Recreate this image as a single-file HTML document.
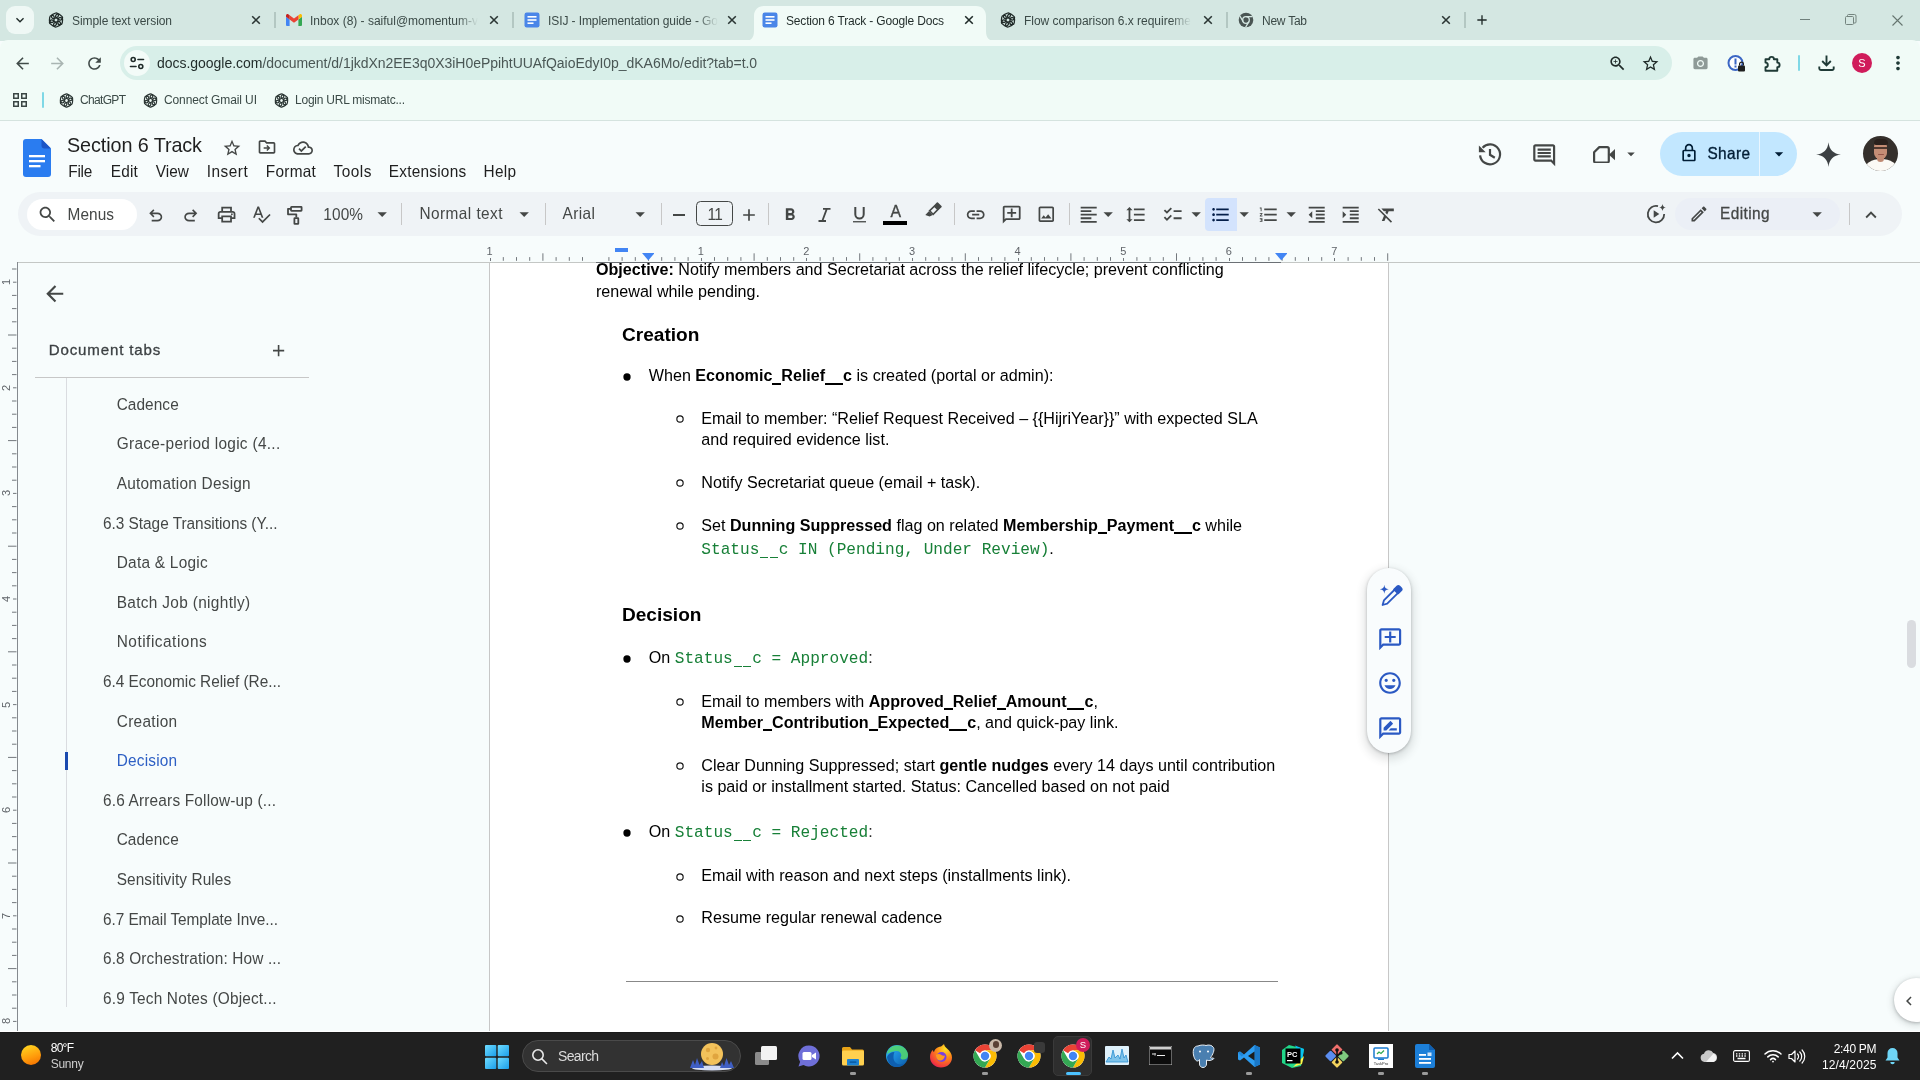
<!DOCTYPE html>
<html><head><meta charset="utf-8"><title>Section 6 Track - Google Docs</title>
<style>
html,body{margin:0;padding:0;width:1920px;height:1080px;overflow:hidden;background:#f7fcfc;}
body{position:relative;font-family:"Liberation Sans",sans-serif;}
.a{position:absolute;display:block;}
.t{position:absolute;white-space:nowrap;font-family:"Liberation Sans",sans-serif;}
#L{position:absolute;left:0;top:0;width:1920px;height:1080px;overflow:hidden;will-change:transform;}
</style></head><body><div id="L">
<div class="a" style="left:0px;top:120px;width:1920px;height:912px;background:#f7fcfc;"></div>
<svg class="a" style="left:23px;top:138.500px" width="28" height="38" viewBox="0 0 28 38"><path d="M3 0H18.500L28 9.500V35a3 3 0 0 1-3 3H3a3 3 0 0 1-3-3V3a3 3 0 0 1 3-3z" fill="#2a7cf0"/><path d="M18.500 0L28 9.500H21.500a3 3 0 0 1-3-3z" fill="#1b55c6"/><rect x="6" y="16" width="16" height="2.300" fill="#fff"/><rect x="6" y="21" width="16" height="2.300" fill="#fff"/><rect x="6" y="26" width="11.500" height="2.300" fill="#fff"/></svg>
<span class="t" style="top:131.84px;font-size:19.8px;line-height:26px;color:#1f1f1f;left:67px;transform:scaleY(1.0);transform-origin:0 19.86px;letter-spacing:-0.096px;">Section 6 Track</span>
<svg class="a" style="left:221.70px;top:137.50px;" width="20" height="20" viewBox="0 0 24 24" fill="#444746"><path d="M22 9.24l-7.19-.62L12 2 9.19 8.63 2 9.24l5.46 4.73L5.82 21 12 17.27 18.18 21l-1.63-7.03L22 9.24zM12 15.4l-3.76 2.27 1-4.28-3.32-2.88 4.38-.38L12 6.1l1.71 4.04 4.38.38-3.32 2.88 1 4.28L12 15.4z"/></svg>
<svg class="a" style="left:256.50px;top:137.00px;" width="20" height="20" viewBox="0 0 24 24" fill="#444746"><path d="M20 6h-8l-2-2H4c-1.1 0-2 .9-2 2v12c0 1.1.9 2 2 2h16c1.1 0 2-.9 2-2V8c0-1.1-.9-2-2-2zm0 12H4V6h5.170l2 2H20v10zm-7.600-1.200L16 13.200l-3.600-3.600-1.200 1.200 1.550 1.550H8v1.700h4.750L11.200 15.600z"/></svg>
<svg class="a" style="left:292.50px;top:137.50px;" width="20" height="20" viewBox="0 0 24 24" fill="#444746"><path d="M19.35 10.04C18.67 6.59 15.64 4 12 4 9.11 4 6.6 5.64 5.35 8.04 2.34 8.36 0 10.91 0 14c0 3.31 2.69 6 6 6h13c2.76 0 5-2.24 5-5 0-2.64-2.05-4.78-4.65-4.960zM19 18H6c-2.210 0-4-1.790-4-4 0-2.050 1.530-3.760 3.560-3.970l1.070-.11.5-.95C8.080 7.140 9.940 6 12 6c2.620 0 4.880 1.860 5.390 4.430l.3 1.500 1.530.11c1.560.1 2.780 1.410 2.780 2.960 0 1.650-1.350 3-3 3zm-9-3.820l-2.090-2.090L6.500 13.500 10 17l6.010-6.010-1.410-1.410z"/></svg>
<span class="t" style="top:161.66px;font-size:15.4px;line-height:20px;color:#1f1f1f;left:68.3px;transform:scaleY(1.03);transform-origin:0 15.34px;letter-spacing:-0.271px;">File</span>
<span class="t" style="top:161.66px;font-size:15.4px;line-height:20px;color:#1f1f1f;left:110.8px;transform:scaleY(1.03);transform-origin:0 15.34px;letter-spacing:0.156px;">Edit</span>
<span class="t" style="top:161.66px;font-size:15.4px;line-height:20px;color:#1f1f1f;left:155.8px;transform:scaleY(1.03);transform-origin:0 15.34px;letter-spacing:-0.031px;">View</span>
<span class="t" style="top:161.66px;font-size:15.4px;line-height:20px;color:#1f1f1f;left:206.7px;transform:scaleY(1.03);transform-origin:0 15.34px;letter-spacing:0.500px;">Insert</span>
<span class="t" style="top:161.66px;font-size:15.4px;line-height:20px;color:#1f1f1f;left:265.8px;transform:scaleY(1.03);transform-origin:0 15.34px;letter-spacing:0.250px;">Format</span>
<span class="t" style="top:161.66px;font-size:15.4px;line-height:20px;color:#1f1f1f;left:333.5px;transform:scaleY(1.03);transform-origin:0 15.34px;letter-spacing:0.516px;">Tools</span>
<span class="t" style="top:161.66px;font-size:15.4px;line-height:20px;color:#1f1f1f;left:388.7px;transform:scaleY(1.03);transform-origin:0 15.34px;letter-spacing:0.245px;">Extensions</span>
<span class="t" style="top:161.66px;font-size:15.4px;line-height:20px;color:#1f1f1f;left:483.5px;transform:scaleY(1.03);transform-origin:0 15.34px;letter-spacing:0.281px;">Help</span>
<svg class="a" style="left:1477px;top:141px;" width="26" height="26" viewBox="0 0 26 26"><path d="M3.100 14.300A10 10 0 1 0 5.600 6.700" fill="none" stroke="#444746" stroke-width="2.200"/><path d="M1.900 4.400V11.200H8.700z" fill="#444746"/><path d="M13 8V13.800L17.800 16.700" fill="none" stroke="#444746" stroke-width="2.200"/></svg>
<svg class="a" style="left:1530.80px;top:141.90px;" width="26.4" height="26.4" viewBox="0 0 24 24" fill="#444746"><path d="M21.99 4c0-1.1-.89-2-1.99-2H4c-1.1 0-2 .9-2 2v12c0 1.1.9 2 2 2h14l4 4-.01-18zM20 4v13.17L18.83 16H4V4h16zM6 12h12v2H6zm0-3h12v2H6zm0-3h12v2H6z"/></svg>
<svg class="a" style="left:1592.8px;top:145.5px;" width="22.4" height="17.6" viewBox="0 0 22.4 17.6"><path d="M6.300 1.100H14.200a1.600 1.600 0 0 1 1.600 1.600V14.900a1.600 1.600 0 0 1-1.600 1.600H2.700a1.600 1.600 0 0 1-1.600-1.600V6.300z" fill="none" stroke="#444746" stroke-width="2.200" stroke-linejoin="round"/><path d="M22.300 2.800V14.600L15.900 8.700z" fill="#444746"/></svg>
<svg class="a" style="left:1622.00px;top:144.50px;" width="18" height="18" viewBox="0 0 24 24" fill="#444746"><path d="M7 10l5 5 5-5z"/></svg>
<div class="a" style="left:1660px;top:132px;width:137px;height:43.5px;background:#c2e7ff;border-radius:22px;"></div>
<div class="a" style="left:1759px;top:132px;width:1px;height:43.5px;background:#eaf6ff;"></div>
<svg class="a" style="left:1678.70px;top:142.50px;" width="20" height="20" viewBox="0 0 24 24" fill="#001d35"><path d="M18 8h-1V6c0-2.76-2.24-5-5-5S7 3.24 7 6v2H6c-1.1 0-2 .9-2 2v10c0 1.1.9 2 2 2h12c1.1 0 2-.9 2-2V10c0-1.1-.9-2-2-2zM9 6c0-1.66 1.34-3 3-3s3 1.34 3 3v2H9V6zm9 14H6V10h12v10zm-6-3c1.1 0 2-.9 2-2s-.9-2-2-2-2 .9-2 2 .9 2 2 2z"/></svg>
<span class="t" style="top:143.86px;font-size:15.4px;line-height:20px;color:#001d35;left:1707.5px;-webkit-text-stroke:0.33px #001d35;transform:scaleY(1.03);transform-origin:0 15.34px;letter-spacing:0.355px;">Share</span>
<svg class="a" style="left:1768.70px;top:143.80px;" width="20" height="20" viewBox="0 0 24 24" fill="#001d35"><path d="M7 10l5 5 5-5z"/></svg>
<svg class="a" style="left:1814.50px;top:140.50px;" width="27" height="27" viewBox="0 0 24 24" fill="#3c4043"><path d="M12 1c.6 6.500 4.500 10.400 11 11-6.500.6-10.400 4.500-11 11-.6-6.500-4.500-10.400-11-11 6.500-.6 10.400-4.500 11-11z"/></svg>
<div class="a" style="left:1863px;top:136.300px;width:35px;height:35px;border-radius:17.500px;overflow:hidden;background:#35302c"><div class="a" style="left:0;top:0;width:35px;height:35px;filter:blur(.750px)"><div class="a" style="left:14.300px;top:18px;width:6.400px;height:8px;background:#b57f69"></div><div class="a" style="left:0.500px;top:22.300px;width:34px;height:24px;border-radius:17px 17px 0 0/11px 11px 0 0;background:#fbf9f5"></div><div class="a" style="left:14px;top:21px;width:7px;height:5px;border-radius:0 0 4px 4px;background:#c08a73"></div><div class="a" style="left:11px;top:4px;width:13px;height:18.500px;border-radius:6.500px 6.500px 6px 6px;background:#c48d75"></div><div class="a" style="left:10.500px;top:2.800px;width:14px;height:6px;border-radius:7px 7px 3px 3px;background:#2a211d"></div><div class="a" style="left:11.300px;top:11px;width:12.400px;height:1.300px;background:rgba(40,28,24,.75)"></div><div class="a" style="left:14.500px;top:17.300px;width:6px;height:1.200px;border-radius:1px;background:rgba(120,50,45,.6)"></div></div></div>
<div class="a" style="left:18px;top:192px;width:1884px;height:44px;background:#eff3f6;border-radius:22px;"></div>
<div class="a" style="left:27px;top:199px;width:110px;height:31px;background:#fff;border-radius:15.5px;"></div>
<svg class="a" style="left:37.00px;top:204.20px;" width="21" height="21" viewBox="0 0 24 24" fill="#444746"><path d="M15.5 14h-.79l-.28-.27C15.41 12.59 16 11.11 16 9.5 16 5.91 13.09 3 9.5 3S3 5.91 3 9.5 5.91 16 9.5 16c1.61 0 3.09-.59 4.23-1.57l.27.28v.79l5 4.99L20.49 19l-4.99-5zm-6 0C7.01 14 5 11.99 5 9.5S7.01 5 9.5 5 14 7.01 14 9.5 11.99 14 9.5 14z"/></svg>
<span class="t" style="top:204.66px;font-size:15.4px;line-height:20px;color:#444746;left:67.5px;transform:scaleY(1.03);transform-origin:0 15.34px;letter-spacing:0.074px;">Menus</span>
<svg class="a" style="left:146.05px;top:206.25px;" width="19.5" height="19.5" viewBox="0 0 24 24" fill="#444746"><path d="M7 19v-2h7.1q1.575 0 2.738-1T18 13.5q0-1.5-1.163-2.5T14.1 10H7.8l2.6 2.6L9 14 4 9l5-5 1.4 1.4L7.8 8h6.3q2.425 0 4.163 1.575T20 13.5q0 2.35-1.738 3.925T14.1 19H7Z"/></svg>
<svg class="a" style="left:180.95px;top:206.25px;" width="19.5" height="19.5" viewBox="0 0 24 24" fill="#444746"><path d="M9.9 19q-2.425 0-4.163-1.575T4 13.5q0-2.35 1.737-3.925T9.900 8h6.300l-2.600-2.600L15 4l5 5-5 5-1.400-1.400 2.600-2.600H9.900q-1.575 0-2.737 1T6 13.5Q6 15 7.163 16T9.900 17H17v2H9.900Z"/></svg>
<svg class="a" style="left:215.50px;top:203.90px;" width="21.2" height="21.2" viewBox="0 0 24 24" fill="#444746"><path d="M19 8h-1V3H6v5H5c-1.66 0-3 1.34-3 3v6h4v4h12v-4h4v-6c0-1.66-1.34-3-3-3zM8 5h8v3H8V5zm8 12v2H8v-4h8v2zm2-2v-2H6v2H4v-4c0-.55.45-1 1-1h14c.55 0 1 .45 1 1v4h-2zM18 10.500a1 1 0 1 0 0 2 1 1 0 0 0 0-2z"/></svg>
<svg class="a" style="left:251.15px;top:204.25px;" width="20.5" height="20.5" viewBox="0 0 24 24" fill="#444746"><path d="M12.45 16h2.09L9.43 3H7.57L2.46 16h2.09l1.12-3h5.64l1.14 3zm-6.02-5L8.5 5.48 10.57 11H6.43zm15.16.59l-8.09 8.09L9.83 16l-1.41 1.41 5.09 5.09L23 13l-1.41-1.41z"/></svg>
<svg class="a" style="left:286px;top:204.8px;" width="18" height="21" viewBox="0 0 18 21"><rect x="5" y="1.900" width="10.600" height="3.900" rx=".500" fill="none" stroke="#444746" stroke-width="1.800"/><path d="M5 3.800H2V9.300H10.300V12.500" fill="none" stroke="#444746" stroke-width="1.800" stroke-linejoin="round"/><rect x="8.400" y="13.200" width="3.900" height="5.700" rx=".400" fill="none" stroke="#444746" stroke-width="1.800"/></svg>
<span class="t" style="top:205.16px;font-size:15.4px;line-height:20px;color:#444746;left:323.3px;transform:scaleY(1.03);transform-origin:0 15.34px;letter-spacing:0.108px;">100%</span>
<svg class="a" style="left:371.30px;top:202.80px;" width="22.4" height="22.4" viewBox="0 0 24 24" fill="#444746"><path d="M7 10l5 5 5-5z"/></svg>
<div class="a" style="left:401.0px;top:203px;width:1px;height:22px;background:#c7c7c7;"></div>
<span class="t" style="top:203.96px;font-size:15.4px;line-height:20px;color:#444746;left:419.5px;transform:scaleY(1.03);transform-origin:0 15.34px;letter-spacing:0.431px;">Normal text</span>
<svg class="a" style="left:512.80px;top:202.80px;" width="22.4" height="22.4" viewBox="0 0 24 24" fill="#444746"><path d="M7 10l5 5 5-5z"/></svg>
<div class="a" style="left:545.0px;top:203px;width:1px;height:22px;background:#c7c7c7;"></div>
<span class="t" style="top:203.96px;font-size:15.4px;line-height:20px;color:#444746;left:562.5px;transform:scaleY(1.03);transform-origin:0 15.34px;letter-spacing:0.426px;">Arial</span>
<svg class="a" style="left:628.80px;top:202.80px;" width="22.4" height="22.4" viewBox="0 0 24 24" fill="#444746"><path d="M7 10l5 5 5-5z"/></svg>
<div class="a" style="left:661.0px;top:203px;width:1px;height:22px;background:#c7c7c7;"></div>
<div class="a" style="left:673px;top:214.2px;width:11.5px;height:1.6px;background:#444746;"></div>
<div class="a" style="left:696px;top:201px;width:36.5px;height:25px;border-radius:4.5px;border:1.100px solid #444746;box-sizing:border-box;"></div>
<span class="t" style="top:205.16px;font-size:15.4px;line-height:20px;color:#444746;left:707.6px;transform:scaleY(1.03);transform-origin:0 15.34px;">1</span>
<span class="t" style="top:205.16px;font-size:15.4px;line-height:20px;color:#444746;left:714.2px;transform:scaleY(1.03);transform-origin:0 15.34px;">1</span>
<svg class="a" style="left:739.00px;top:205.00px;" width="20" height="20" viewBox="0 0 24 24" fill="#444746"><path d="M19 13h-6v6h-2v-6H5v-2h6V5h2v6h6v2z"/></svg>
<div class="a" style="left:768.0px;top:203px;width:1px;height:22px;background:#c7c7c7;"></div>
<svg class="a" style="left:779.80px;top:204.90px;" width="20" height="20" viewBox="0 0 24 24" fill="#444746"><path d="M15.6 10.79c.97-.67 1.65-1.77 1.65-2.79 0-2.26-1.75-4-4-4H7v14h7.04c2.09 0 3.71-1.7 3.71-3.79 0-1.52-.86-2.82-2.15-3.42zM10 6.5h3c.83 0 1.5.67 1.5 1.5s-.67 1.5-1.5 1.5h-3v-3zm3.5 9H10v-3h3.5c.83 0 1.5.67 1.5 1.5s-.67 1.5-1.5 1.5z"/></svg>
<svg class="a" style="left:817.6px;top:207px;" width="14" height="16" viewBox="0 0 14 16"><path d="M5 1.900H12.500M.500 14H8M8.800 1.900L4.300 14" fill="none" stroke="#444746" stroke-width="1.800"/></svg>
<svg class="a" style="left:851.6px;top:206px;" width="15" height="17.5" viewBox="0 0 15 17.5"><path d="M3.300 1V8.200a4.200 4.200 0 0 0 8.400 0V1" fill="none" stroke="#444746" stroke-width="2"/><rect x="1" y="15.100" width="13" height="1.300" fill="#444746"/></svg>
<span class="t" style="top:201.33px;font-size:15.8px;line-height:21px;color:#444746;left:895.7px;transform:translateX(-50%);-webkit-text-stroke:0.35px #444746;">A</span>
<div class="a" style="left:883px;top:221px;width:24px;height:4px;background:#000;"></div>
<svg class="a" style="left:923.7px;top:202.2px;" width="18" height="18" viewBox="0 0 18 18"><g transform="rotate(45 9 9)"><rect x="5.700" y="-0.500" width="6.600" height="5" rx=".800" fill="#444746"/><rect x="6.500" y="4.500" width="5" height="6.800" fill="none" stroke="#444746" stroke-width="1.600"/><path d="M6.300 12.100H11.700L10.500 15.300L6.300 17.200z" fill="#444746"/></g></svg>
<div class="a" style="left:954.0px;top:203px;width:1px;height:22px;background:#c7c7c7;"></div>
<svg class="a" style="left:965.20px;top:204.30px;" width="21.4" height="21.4" viewBox="0 0 24 24" fill="#444746"><path d="M3.9 12c0-1.71 1.39-3.1 3.1-3.1h4V7H7c-2.76 0-5 2.24-5 5s2.24 5 5 5h4v-1.9H7c-1.71 0-3.1-1.39-3.1-3.1zM8 13h8v-2H8v2zm9-6h-4v1.9h4c1.71 0 3.1 1.39 3.1 3.1s-1.39 3.1-3.1 3.1h-4V17h4c2.76 0 5-2.24 5-5s-2.24-5-5-5z"/></svg>
<svg class="a" style="left:1000.50px;top:203.50px;transform:scaleX(-1);" width="21.4" height="21.4" viewBox="0 0 24 24" fill="#444746"><path d="M22 4c0-1.1-.9-2-2-2H4c-1.1 0-2 .9-2 2v12c0 1.1.9 2 2 2h14l4 4V4zm-2 13.17L18.83 16H4V4h16v13.17zM13 5h-2v4H7v2h4v4h2v-4h4V9h-4z"/></svg>
<svg class="a" style="left:1036.20px;top:204.00px;" width="20.6" height="20.6" viewBox="0 0 24 24" fill="#444746"><path d="M19 5v14H5V5h14m0-2H5c-1.1 0-2 .9-2 2v14c0 1.1.9 2 2 2h14c1.1 0 2-.9 2-2V5c0-1.1-.9-2-2-2zm-4.86 8.86l-3 3.87L9 13.14 6 17h12l-3.86-5.14z"/></svg>
<div class="a" style="left:1069.0px;top:203px;width:1px;height:22px;background:#c7c7c7;"></div>
<svg class="a" style="left:1078.30px;top:203.50px;" width="21.4" height="21.4" viewBox="0 0 24 24" fill="#444746"><path d="M15 15H3v2h12v-2zm0-8H3v2h12V7zM3 13h18v-2H3v2zm0 8h18v-2H3v2zM3 3v2h18V3H3z"/></svg>
<svg class="a" style="left:1097.00px;top:202.80px;" width="22.4" height="22.4" viewBox="0 0 24 24" fill="#444746"><path d="M7 10l5 5 5-5z"/></svg>
<svg class="a" style="left:1125.30px;top:203.70px;" width="21.4" height="21.4" viewBox="0 0 24 24" fill="#444746"><path d="M6 7h2.5L5 3.5 1.5 7H4v10H1.5L5 20.5 8.5 17H6V7zm4-2v2h12V5H10zm0 14h12v-2H10v2zm0-6h12v-2H10v2z"/></svg>
<svg class="a" style="left:1162.30px;top:203.70px;" width="21.4" height="21.4" viewBox="0 0 24 24" fill="#444746"><path d="M22 7h-9v2h9V7zm0 8h-9v2h9v-2zM5.54 11L2 7.46l1.41-1.41 2.12 2.12 4.24-4.24 1.41 1.41L5.54 11zm0 8L2 15.46l1.41-1.41 2.12 2.12 4.24-4.24 1.41 1.41L5.54 19z"/></svg>
<svg class="a" style="left:1184.80px;top:202.80px;" width="22.4" height="22.4" viewBox="0 0 24 24" fill="#444746"><path d="M7 10l5 5 5-5z"/></svg>
<div class="a" style="left:1205px;top:198px;width:32px;height:33px;background:#d3e3fd;border-radius:4px 0 0 4px;"></div>
<svg class="a" style="left:1210.30px;top:203.70px;" width="21.4" height="21.4" viewBox="0 0 24 24" fill="#041e49"><path d="M4 10.5c-.83 0-1.5.67-1.5 1.5s.67 1.5 1.5 1.5 1.5-.67 1.5-1.5-.67-1.5-1.5-1.5zm0-6c-.83 0-1.5.67-1.5 1.5S3.17 7.5 4 7.5 5.5 6.83 5.500 6 4.83 4.5 4 4.5zm0 12c-.83 0-1.5.68-1.5 1.5s.68 1.5 1.5 1.5 1.5-.68 1.5-1.5-.67-1.5-1.5-1.5zM7 19h14v-2H7v2zm0-6h14v-2H7v2zm0-8v2h14V5H7z"/></svg>
<svg class="a" style="left:1232.80px;top:202.80px;" width="22.4" height="22.4" viewBox="0 0 24 24" fill="#444746"><path d="M7 10l5 5 5-5z"/></svg>
<svg class="a" style="left:1258.00px;top:203.70px;" width="21.4" height="21.4" viewBox="0 0 24 24" fill="#444746"><path d="M2 17h2v.5H3v1h1v.5H2v1h3v-4H2v1zm1-9h1V4H2v1h1v3zm-1 3h1.8L2 13.1v.9h3v-1H3.2L5 10.9V10H2v1zm5-6v2h14V5H7zm0 14h14v-2H7v2zm0-6h14v-2H7v2z"/></svg>
<svg class="a" style="left:1279.80px;top:202.80px;" width="22.4" height="22.4" viewBox="0 0 24 24" fill="#444746"><path d="M7 10l5 5 5-5z"/></svg>
<svg class="a" style="left:1306.30px;top:203.70px;" width="21.4" height="21.4" viewBox="0 0 24 24" fill="#444746"><path d="M11 17h10v-2H11v2zm-8-5l4 4V8l-4 4zm0 9h18v-2H3v2zM3 3v2h18V3H3zm8 6h10V7H11v2zm0 4h10v-2H11v2z"/></svg>
<svg class="a" style="left:1340.30px;top:203.70px;" width="21.4" height="21.4" viewBox="0 0 24 24" fill="#444746"><path d="M3 21h18v-2H3v2zM3 8v8l4-4-4-4zm8 9h10v-2H11v2zM3 3v2h18V3H3zm8 6h10V7H11v2zm0 4h10v-2H11v2z"/></svg>
<svg class="a" style="left:1376.00px;top:203.70px;" width="21.4" height="21.4" viewBox="0 0 24 24" fill="#444746"><path d="M3.27 5L2 6.27l6.97 6.97L6.5 19h3l1.57-3.66L16.73 21 18 19.730 3.55 5.27 3.27 5zM6 5v.18L8.82 8h2.4l-.72 1.68 2.1 2.1L14.21 8H20V5H6z"/></svg>
<svg class="a" style="left:1644.500px;top:203px" width="22" height="22" viewBox="0 0 22 22" fill="none" stroke="#444746" stroke-width="1.800"><path d="M13 3.200A8.200 8.200 0 1 0 19.200 11"/><path d="M8.700 7.300V14.700L14.300 11z" fill="#444746" stroke="none"/><path d="M17.500 1c.2 2 1.400 3.300 3.500 3.500-2.100.2-3.300 1.500-3.500 3.500-.2-2-1.400-3.300-3.500-3.500 2.100-.2 3.300-1.500 3.500-3.500z" fill="#444746" stroke="none"/></svg>
<div class="a" style="left:1674.5px;top:198px;width:165px;height:32px;background:#ebeff6;border-radius:16px;"></div>
<svg class="a" style="left:1689.00px;top:203.50px;" width="20" height="20" viewBox="0 0 24 24" fill="#444746"><path d="M14.06 9.02l.92.92L5.92 19H5v-.92l9.06-9.060M17.66 3c-.25 0-.51.1-.7.29l-1.83 1.83 3.75 3.75 1.83-1.83c.39-.39.39-1.02 0-1.410l-2.340-2.340c-.2-.2-.45-.29-.71-.29zm-3.6 3.19L3 17.25V21h3.75L17.81 9.94l-3.75-3.75z"/></svg>
<span class="t" style="top:203.86px;font-size:15.4px;line-height:20px;color:#444746;left:1720px;-webkit-text-stroke:0.28px #444746;transform:scaleY(1.03);transform-origin:0 15.34px;letter-spacing:0.406px;">Editing</span>
<svg class="a" style="left:1805.50px;top:202.80px;" width="22.4" height="22.4" viewBox="0 0 24 24" fill="#444746"><path d="M7 10l5 5 5-5z"/></svg>
<div class="a" style="left:1849px;top:203px;width:1px;height:22px;background:#c7c7c7;"></div>
<svg class="a" style="left:1859.70px;top:204.00px;" width="22" height="22" viewBox="0 0 24 24" fill="#444746"><path d="M12 8l-6 6 1.41 1.41L12 10.83l4.59 4.58L18 14z"/></svg>
<svg class="a" style="left:0;top:0" width="1920" height="263" fill="#73787d"><rect x="502.80" y="257.1" width="1" height="3.7"/><rect x="516.00" y="257.1" width="1" height="3.7"/><rect x="529.20" y="257.1" width="1" height="3.7"/><rect x="542.40" y="253.3" width="1" height="7.5"/><rect x="555.60" y="257.1" width="1" height="3.7"/><rect x="568.80" y="257.1" width="1" height="3.7"/><rect x="582.00" y="257.1" width="1" height="3.7"/><rect x="608.40" y="257.1" width="1" height="3.7"/><rect x="621.60" y="257.1" width="1" height="3.7"/><rect x="634.80" y="257.1" width="1" height="3.7"/><rect x="648.00" y="253.3" width="1" height="7.5"/><rect x="661.20" y="257.1" width="1" height="3.7"/><rect x="674.40" y="257.1" width="1" height="3.7"/><rect x="687.60" y="257.1" width="1" height="3.7"/><rect x="714.00" y="257.1" width="1" height="3.7"/><rect x="727.20" y="257.1" width="1" height="3.7"/><rect x="740.40" y="257.1" width="1" height="3.7"/><rect x="753.60" y="253.3" width="1" height="7.5"/><rect x="766.80" y="257.1" width="1" height="3.7"/><rect x="780.00" y="257.1" width="1" height="3.7"/><rect x="793.20" y="257.1" width="1" height="3.7"/><rect x="819.60" y="257.1" width="1" height="3.7"/><rect x="832.80" y="257.1" width="1" height="3.7"/><rect x="846.00" y="257.1" width="1" height="3.7"/><rect x="859.20" y="253.3" width="1" height="7.5"/><rect x="872.40" y="257.1" width="1" height="3.7"/><rect x="885.60" y="257.1" width="1" height="3.7"/><rect x="898.80" y="257.1" width="1" height="3.7"/><rect x="925.20" y="257.1" width="1" height="3.7"/><rect x="938.40" y="257.1" width="1" height="3.7"/><rect x="951.60" y="257.1" width="1" height="3.7"/><rect x="964.80" y="253.3" width="1" height="7.5"/><rect x="978.00" y="257.1" width="1" height="3.7"/><rect x="991.20" y="257.1" width="1" height="3.7"/><rect x="1004.40" y="257.1" width="1" height="3.7"/><rect x="1030.80" y="257.1" width="1" height="3.7"/><rect x="1044.00" y="257.1" width="1" height="3.7"/><rect x="1057.20" y="257.1" width="1" height="3.7"/><rect x="1070.40" y="253.3" width="1" height="7.5"/><rect x="1083.60" y="257.1" width="1" height="3.7"/><rect x="1096.80" y="257.1" width="1" height="3.7"/><rect x="1110.00" y="257.1" width="1" height="3.7"/><rect x="1136.40" y="257.1" width="1" height="3.7"/><rect x="1149.60" y="257.1" width="1" height="3.7"/><rect x="1162.80" y="257.1" width="1" height="3.7"/><rect x="1176.00" y="253.3" width="1" height="7.5"/><rect x="1189.20" y="257.1" width="1" height="3.7"/><rect x="1202.40" y="257.1" width="1" height="3.7"/><rect x="1215.60" y="257.1" width="1" height="3.7"/><rect x="1242.00" y="257.1" width="1" height="3.7"/><rect x="1255.20" y="257.1" width="1" height="3.7"/><rect x="1268.40" y="257.1" width="1" height="3.7"/><rect x="1281.60" y="253.3" width="1" height="7.5"/><rect x="1294.80" y="257.1" width="1" height="3.7"/><rect x="1308.00" y="257.1" width="1" height="3.7"/><rect x="1321.20" y="257.1" width="1" height="3.7"/><rect x="1347.60" y="257.1" width="1" height="3.7"/><rect x="1360.80" y="257.1" width="1" height="3.7"/><rect x="1374.00" y="257.1" width="1" height="3.7"/><rect x="1387.20" y="253.3" width="1" height="7.5"/></svg>
<span class="t" style="top:243.69px;font-size:11px;line-height:14px;color:#5f6368;left:489.6px;transform:translateX(-50%);">1</span>
<div class="a" style="left:489.6px;top:258px;width:1px;height:2.8px;background:#73787d;"></div>
<span class="t" style="top:243.69px;font-size:11px;line-height:14px;color:#5f6368;left:700.8000000000001px;transform:translateX(-50%);">1</span>
<div class="a" style="left:700.8000000000001px;top:258px;width:1px;height:2.8px;background:#73787d;"></div>
<span class="t" style="top:243.69px;font-size:11px;line-height:14px;color:#5f6368;left:806.4000000000001px;transform:translateX(-50%);">2</span>
<div class="a" style="left:806.4000000000001px;top:258px;width:1px;height:2.8px;background:#73787d;"></div>
<span class="t" style="top:243.69px;font-size:11px;line-height:14px;color:#5f6368;left:912.0px;transform:translateX(-50%);">3</span>
<div class="a" style="left:912.0px;top:258px;width:1px;height:2.8px;background:#73787d;"></div>
<span class="t" style="top:243.69px;font-size:11px;line-height:14px;color:#5f6368;left:1017.6px;transform:translateX(-50%);">4</span>
<div class="a" style="left:1017.6px;top:258px;width:1px;height:2.8px;background:#73787d;"></div>
<span class="t" style="top:243.69px;font-size:11px;line-height:14px;color:#5f6368;left:1123.2px;transform:translateX(-50%);">5</span>
<div class="a" style="left:1123.2px;top:258px;width:1px;height:2.8px;background:#73787d;"></div>
<span class="t" style="top:243.69px;font-size:11px;line-height:14px;color:#5f6368;left:1228.8px;transform:translateX(-50%);">6</span>
<div class="a" style="left:1228.8px;top:258px;width:1px;height:2.8px;background:#73787d;"></div>
<span class="t" style="top:243.69px;font-size:11px;line-height:14px;color:#5f6368;left:1334.4px;transform:translateX(-50%);">7</span>
<div class="a" style="left:1334.4px;top:258px;width:1px;height:2.8px;background:#73787d;"></div>
<div class="a" style="left:17px;top:262px;width:1903px;height:1px;background:#c4c7c5;"></div>
<div class="a" style="left:595.7px;top:262px;width:685.6px;height:1px;background:#6b7075;"></div>
<div class="a" style="left:615px;top:247.8px;width:13px;height:4.2px;background:#4285f4;"></div>
<svg class="a" style="left:641.800px;top:252.800px" width="12.600" height="7.400" viewBox="0 0 12.600 7.400"><path d="M0 0H12.600L6.300 7.400z" fill="#4285f4"/></svg>
<svg class="a" style="left:1274.700px;top:252.800px" width="12.600" height="7.400" viewBox="0 0 12.600 7.400"><path d="M0 0H12.600L6.300 7.400z" fill="#4285f4"/></svg>
<div class="a" style="left:17px;top:262px;width:1px;height:770px;background:#858a8f;"></div>
<span class="t" style="left:6px;top:282.20px;font-size:11px;line-height:12px;color:#5f6368;transform:translate(-50%,-50%) rotate(-90deg)">1</span>
<span class="t" style="left:6px;top:387.80px;font-size:11px;line-height:12px;color:#5f6368;transform:translate(-50%,-50%) rotate(-90deg)">2</span>
<span class="t" style="left:6px;top:493.40px;font-size:11px;line-height:12px;color:#5f6368;transform:translate(-50%,-50%) rotate(-90deg)">3</span>
<span class="t" style="left:6px;top:599.00px;font-size:11px;line-height:12px;color:#5f6368;transform:translate(-50%,-50%) rotate(-90deg)">4</span>
<span class="t" style="left:6px;top:704.60px;font-size:11px;line-height:12px;color:#5f6368;transform:translate(-50%,-50%) rotate(-90deg)">5</span>
<span class="t" style="left:6px;top:810.20px;font-size:11px;line-height:12px;color:#5f6368;transform:translate(-50%,-50%) rotate(-90deg)">6</span>
<span class="t" style="left:6px;top:915.80px;font-size:11px;line-height:12px;color:#5f6368;transform:translate(-50%,-50%) rotate(-90deg)">7</span>
<span class="t" style="left:6px;top:1021.40px;font-size:11px;line-height:12px;color:#5f6368;transform:translate(-50%,-50%) rotate(-90deg)">8</span>
<svg class="a" style="left:0;top:0" width="18" height="1032" fill="#73787d"><rect x="12" y="268.50" width="4.500" height="1"/><rect x="13" y="281.70" width="3.500" height="1"/><rect x="12" y="294.90" width="4.500" height="1"/><rect x="12" y="308.10" width="4.500" height="1"/><rect x="12" y="321.30" width="4.500" height="1"/><rect x="8" y="334.50" width="8.500" height="1"/><rect x="12" y="347.70" width="4.500" height="1"/><rect x="12" y="360.90" width="4.500" height="1"/><rect x="12" y="374.10" width="4.500" height="1"/><rect x="13" y="387.30" width="3.500" height="1"/><rect x="12" y="400.50" width="4.500" height="1"/><rect x="12" y="413.70" width="4.500" height="1"/><rect x="12" y="426.90" width="4.500" height="1"/><rect x="8" y="440.10" width="8.500" height="1"/><rect x="12" y="453.30" width="4.500" height="1"/><rect x="12" y="466.50" width="4.500" height="1"/><rect x="12" y="479.70" width="4.500" height="1"/><rect x="13" y="492.90" width="3.500" height="1"/><rect x="12" y="506.10" width="4.500" height="1"/><rect x="12" y="519.30" width="4.500" height="1"/><rect x="12" y="532.50" width="4.500" height="1"/><rect x="8" y="545.70" width="8.500" height="1"/><rect x="12" y="558.90" width="4.500" height="1"/><rect x="12" y="572.10" width="4.500" height="1"/><rect x="12" y="585.30" width="4.500" height="1"/><rect x="13" y="598.50" width="3.500" height="1"/><rect x="12" y="611.70" width="4.500" height="1"/><rect x="12" y="624.90" width="4.500" height="1"/><rect x="12" y="638.10" width="4.500" height="1"/><rect x="8" y="651.30" width="8.500" height="1"/><rect x="12" y="664.50" width="4.500" height="1"/><rect x="12" y="677.70" width="4.500" height="1"/><rect x="12" y="690.90" width="4.500" height="1"/><rect x="13" y="704.10" width="3.500" height="1"/><rect x="12" y="717.30" width="4.500" height="1"/><rect x="12" y="730.50" width="4.500" height="1"/><rect x="12" y="743.70" width="4.500" height="1"/><rect x="8" y="756.90" width="8.500" height="1"/><rect x="12" y="770.10" width="4.500" height="1"/><rect x="12" y="783.30" width="4.500" height="1"/><rect x="12" y="796.50" width="4.500" height="1"/><rect x="13" y="809.70" width="3.500" height="1"/><rect x="12" y="822.90" width="4.500" height="1"/><rect x="12" y="836.10" width="4.500" height="1"/><rect x="12" y="849.30" width="4.500" height="1"/><rect x="8" y="862.50" width="8.500" height="1"/><rect x="12" y="875.70" width="4.500" height="1"/><rect x="12" y="888.90" width="4.500" height="1"/><rect x="12" y="902.10" width="4.500" height="1"/><rect x="13" y="915.30" width="3.500" height="1"/><rect x="12" y="928.50" width="4.500" height="1"/><rect x="12" y="941.70" width="4.500" height="1"/><rect x="12" y="954.90" width="4.500" height="1"/><rect x="8" y="968.10" width="8.500" height="1"/><rect x="12" y="981.30" width="4.500" height="1"/><rect x="12" y="994.50" width="4.500" height="1"/><rect x="12" y="1007.70" width="4.500" height="1"/><rect x="13" y="1020.90" width="3.500" height="1"/></svg>
<div class="a" style="left:489px;top:263px;width:900px;height:769px;background:#fff;border-left:1px solid #c7c7c7;border-right:1px solid #c7c7c7;box-sizing:border-box;"></div>
<span class="t" style="top:259.01px;font-size:16.13px;line-height:21px;color:#000;left:596px;"><b>Objective:</b> Notify members and Secretariat across the relief lifecycle; prevent conflicting</span>
<span class="t" style="top:281.41px;font-size:16.13px;line-height:21px;color:#000;left:596px;">renewal while pending.</span>
<span class="t" style="top:323.39px;font-size:19.07px;line-height:24px;color:#000;left:622px;font-weight:bold;">Creation</span>
<svg class="a" style="left:622px;top:371.60px" width="10" height="10"><circle cx="5" cy="5" r="3.650" fill="#000"/></svg>
<span class="t" style="top:365.11px;font-size:16.13px;line-height:21px;color:#000;left:648.8px;">When <b>Economic<span style="display:inline-block;width:.556em;height:0;border-bottom:2.300px solid #000;vertical-align:-3.500px"></span>Relief<span style="display:inline-block;width:.556em;height:0;border-bottom:2.300px solid #000;vertical-align:-3.500px"></span><span style="display:inline-block;width:.556em;height:0;border-bottom:2.300px solid #000;vertical-align:-3.500px"></span>c</b> is created (portal or admin):</span>
<svg class="a" style="left:674.700px;top:414.30px" width="10" height="10"><circle cx="5" cy="5" r="3.150" fill="none" stroke="#111" stroke-width="1.150"/></svg>
<span class="t" style="top:407.91px;font-size:16.13px;line-height:21px;color:#000;left:701.3px;">Email to member: “Relief Request Received – {{HijriYear}}” with expected SLA</span>
<span class="t" style="top:428.71px;font-size:16.13px;line-height:21px;color:#000;left:701.3px;">and required evidence list.</span>
<svg class="a" style="left:674.700px;top:478.10px" width="10" height="10"><circle cx="5" cy="5" r="3.150" fill="none" stroke="#111" stroke-width="1.150"/></svg>
<span class="t" style="top:471.71px;font-size:16.13px;line-height:21px;color:#000;left:701.3px;">Notify Secretariat queue (email + task).</span>
<svg class="a" style="left:674.700px;top:521.10px" width="10" height="10"><circle cx="5" cy="5" r="3.150" fill="none" stroke="#111" stroke-width="1.150"/></svg>
<span class="t" style="top:514.71px;font-size:16.13px;line-height:21px;color:#000;left:701.3px;">Set <b>Dunning Suppressed</b> flag on related <b>Membership<span style="display:inline-block;width:.556em;height:0;border-bottom:2.300px solid #000;vertical-align:-3.500px"></span>Payment<span style="display:inline-block;width:.556em;height:0;border-bottom:2.300px solid #000;vertical-align:-3.500px"></span><span style="display:inline-block;width:.556em;height:0;border-bottom:2.300px solid #000;vertical-align:-3.500px"></span>c</b> while</span>
<span class="t" style="top:538.11px;font-size:16.13px;line-height:21px;color:#000;left:701.3px;"><span style="font-family:'Liberation Mono',monospace;color:#188038">Status<span style="display:inline-block;width:.6em;height:0;vertical-align:-3.100px"><span style="display:block;margin:0 .060em;border-bottom:1.450px solid #188038"></span></span><span style="display:inline-block;width:.6em;height:0;vertical-align:-3.100px"><span style="display:block;margin:0 .060em;border-bottom:1.450px solid #188038"></span></span>c IN (Pending, Under Review)</span>.</span>
<span class="t" style="top:602.99px;font-size:19.07px;line-height:24px;color:#000;left:622px;font-weight:bold;">Decision</span>
<svg class="a" style="left:622px;top:653.60px" width="10" height="10"><circle cx="5" cy="5" r="3.650" fill="#000"/></svg>
<span class="t" style="top:647.11px;font-size:16.13px;line-height:21px;color:#000;left:648.8px;">On <span style="font-family:'Liberation Mono',monospace;color:#188038">Status<span style="display:inline-block;width:.6em;height:0;vertical-align:-3.100px"><span style="display:block;margin:0 .060em;border-bottom:1.450px solid #188038"></span></span><span style="display:inline-block;width:.6em;height:0;vertical-align:-3.100px"><span style="display:block;margin:0 .060em;border-bottom:1.450px solid #188038"></span></span>c = Approved</span><span style="color:#2a2a2a">:</span></span>
<svg class="a" style="left:674.700px;top:697.20px" width="10" height="10"><circle cx="5" cy="5" r="3.150" fill="none" stroke="#111" stroke-width="1.150"/></svg>
<span class="t" style="top:690.81px;font-size:16.13px;line-height:21px;color:#000;left:701.3px;">Email to members with <b>Approved<span style="display:inline-block;width:.556em;height:0;border-bottom:2.300px solid #000;vertical-align:-3.500px"></span>Relief<span style="display:inline-block;width:.556em;height:0;border-bottom:2.300px solid #000;vertical-align:-3.500px"></span>Amount<span style="display:inline-block;width:.556em;height:0;border-bottom:2.300px solid #000;vertical-align:-3.500px"></span><span style="display:inline-block;width:.556em;height:0;border-bottom:2.300px solid #000;vertical-align:-3.500px"></span>c</b>,</span>
<span class="t" style="top:711.71px;font-size:16.13px;line-height:21px;color:#000;left:701.3px;"><b>Member<span style="display:inline-block;width:.556em;height:0;border-bottom:2.300px solid #000;vertical-align:-3.500px"></span>Contribution<span style="display:inline-block;width:.556em;height:0;border-bottom:2.300px solid #000;vertical-align:-3.500px"></span>Expected<span style="display:inline-block;width:.556em;height:0;border-bottom:2.300px solid #000;vertical-align:-3.500px"></span><span style="display:inline-block;width:.556em;height:0;border-bottom:2.300px solid #000;vertical-align:-3.500px"></span>c</b>, and quick-pay link.</span>
<svg class="a" style="left:674.700px;top:761.10px" width="10" height="10"><circle cx="5" cy="5" r="3.150" fill="none" stroke="#111" stroke-width="1.150"/></svg>
<span class="t" style="top:754.71px;font-size:16.13px;line-height:21px;color:#000;left:701.3px;">Clear Dunning Suppressed; start <b>gentle nudges</b> every 14 days until contribution</span>
<span class="t" style="top:776.21px;font-size:16.13px;line-height:21px;color:#000;left:701.3px;">is paid or installment started. Status: Cancelled based on not paid</span>
<svg class="a" style="left:622px;top:827.80px" width="10" height="10"><circle cx="5" cy="5" r="3.650" fill="#000"/></svg>
<span class="t" style="top:821.31px;font-size:16.13px;line-height:21px;color:#000;left:648.8px;">On <span style="font-family:'Liberation Mono',monospace;color:#188038">Status<span style="display:inline-block;width:.6em;height:0;vertical-align:-3.100px"><span style="display:block;margin:0 .060em;border-bottom:1.450px solid #188038"></span></span><span style="display:inline-block;width:.6em;height:0;vertical-align:-3.100px"><span style="display:block;margin:0 .060em;border-bottom:1.450px solid #188038"></span></span>c = Rejected</span><span style="color:#2a2a2a">:</span></span>
<svg class="a" style="left:674.700px;top:871.70px" width="10" height="10"><circle cx="5" cy="5" r="3.150" fill="none" stroke="#111" stroke-width="1.150"/></svg>
<span class="t" style="top:865.31px;font-size:16.13px;line-height:21px;color:#000;left:701.3px;">Email with reason and next steps (installments link).</span>
<svg class="a" style="left:674.700px;top:913.70px" width="10" height="10"><circle cx="5" cy="5" r="3.150" fill="none" stroke="#111" stroke-width="1.150"/></svg>
<span class="t" style="top:907.31px;font-size:16.13px;line-height:21px;color:#000;left:701.3px;">Resume regular renewal cadence</span>
<div class="a" style="left:626px;top:981px;width:652px;height:1px;background:#888;"></div>
<svg class="a" style="left:41.65px;top:280.95px;" width="25.5" height="25.5" viewBox="0 0 24 24" fill="#444746"><path d="M20 11H7.83l5.59-5.59L12 4l-8 8 8 8 1.41-1.41L7.83 13H20v-2z"/></svg>
<span class="t" style="top:339.57px;font-size:15.1px;line-height:20px;color:#3c4043;left:48.8px;-webkit-text-stroke:0.3px #3c4043;transform:scaleY(0.94);transform-origin:0 15.23px;letter-spacing:0.824px;">Document tabs</span>
<svg class="a" style="left:269.00px;top:340.70px;" width="19.2" height="19.2" viewBox="0 0 24 24" fill="#444746"><path d="M19 13h-6v6h-2v-6H5v-2h6V5h2v6h6v2z"/></svg>
<div class="a" style="left:35px;top:377px;width:274px;height:1px;background:#c7c7c7;"></div>
<div class="a" style="left:65.5px;top:378px;width:1.5px;height:629px;background:#dadce0;"></div>
<div class="a" style="left:65px;top:752px;width:2.5px;height:18px;background:#1b4aaf;"></div>
<span class="t" style="top:394.76px;font-size:15.4px;line-height:20px;color:#444746;left:116.7px;transform:scaleY(1.035);transform-origin:0 15.34px;letter-spacing:0.065px;">Cadence</span>
<span class="t" style="top:434.36px;font-size:15.4px;line-height:20px;color:#444746;left:116.7px;transform:scaleY(1.035);transform-origin:0 15.34px;letter-spacing:0.302px;">Grace-period logic (4...</span>
<span class="t" style="top:473.96px;font-size:15.4px;line-height:20px;color:#444746;left:116.7px;transform:scaleY(1.035);transform-origin:0 15.34px;letter-spacing:0.247px;">Automation Design</span>
<span class="t" style="top:513.56px;font-size:15.4px;line-height:20px;color:#444746;left:103px;transform:scaleY(1.035);transform-origin:0 15.34px;letter-spacing:-0.023px;">6.3 Stage Transitions (Y...</span>
<span class="t" style="top:553.16px;font-size:15.4px;line-height:20px;color:#444746;left:116.7px;transform:scaleY(1.035);transform-origin:0 15.34px;letter-spacing:0.261px;">Data &amp; Logic</span>
<span class="t" style="top:592.76px;font-size:15.4px;line-height:20px;color:#444746;left:116.7px;transform:scaleY(1.035);transform-origin:0 15.34px;letter-spacing:0.335px;">Batch Job (nightly)</span>
<span class="t" style="top:632.36px;font-size:15.4px;line-height:20px;color:#444746;left:116.7px;transform:scaleY(1.035);transform-origin:0 15.34px;letter-spacing:0.513px;">Notifications</span>
<span class="t" style="top:671.96px;font-size:15.4px;line-height:20px;color:#444746;left:103px;transform:scaleY(1.035);transform-origin:0 15.34px;letter-spacing:-0.031px;">6.4 Economic Relief (Re...</span>
<span class="t" style="top:711.56px;font-size:15.4px;line-height:20px;color:#444746;left:116.7px;transform:scaleY(1.035);transform-origin:0 15.34px;letter-spacing:0.330px;">Creation</span>
<span class="t" style="top:751.16px;font-size:15.4px;line-height:20px;color:#2d5fc4;left:116.7px;transform:scaleY(1.035);transform-origin:0 15.34px;letter-spacing:0.210px;">Decision</span>
<span class="t" style="top:790.76px;font-size:15.4px;line-height:20px;color:#444746;left:103px;transform:scaleY(1.035);transform-origin:0 15.34px;letter-spacing:0.180px;">6.6 Arrears Follow-up (...</span>
<span class="t" style="top:830.36px;font-size:15.4px;line-height:20px;color:#444746;left:116.7px;transform:scaleY(1.035);transform-origin:0 15.34px;letter-spacing:0.065px;">Cadence</span>
<span class="t" style="top:869.96px;font-size:15.4px;line-height:20px;color:#444746;left:116.7px;transform:scaleY(1.035);transform-origin:0 15.34px;letter-spacing:0.100px;">Sensitivity Rules</span>
<span class="t" style="top:909.56px;font-size:15.4px;line-height:20px;color:#444746;left:103px;transform:scaleY(1.035);transform-origin:0 15.34px;letter-spacing:-0.072px;">6.7 Email Template Inve...</span>
<span class="t" style="top:949.16px;font-size:15.4px;line-height:20px;color:#444746;left:103px;transform:scaleY(1.035);transform-origin:0 15.34px;letter-spacing:0.140px;">6.8 Orchestration: How ...</span>
<span class="t" style="top:988.76px;font-size:15.4px;line-height:20px;color:#444746;left:103px;transform:scaleY(1.035);transform-origin:0 15.34px;letter-spacing:0.184px;">6.9 Tech Notes (Object...</span>
<div class="a" style="left:1367px;top:568.3px;width:44px;height:184.3px;background:#f9fcfd;border-radius:22px;box-shadow:0 1px 3px rgba(60,64,67,.32),0 4px 8px 3px rgba(60,64,67,.14);"></div>
<svg class="a" style="left:1379px;top:584px" width="24" height="23" viewBox="0 0 24 23" fill="none" stroke="#2b59c3" stroke-width="2" stroke-linejoin="round"><path d="M3.600 21L4.900 16.400 16.300 5 19.600 8.300 8.200 19.700z" stroke-width="1.800"/><path d="M15.300 5.500L18.300 2.500a1.500 1.500 0 0 1 2.100 0L22.100 4.200a1.500 1.500 0 0 1 0 2.100L19.100 9.300z" fill="#2b59c3"/><path d="M5.300 .8c.35 3 1.450 4.100 4.450 4.450C6.750 5.600 5.650 6.700 5.300 9.700 4.950 6.700 3.850 5.600 .850 5.250 3.850 4.900 4.950 3.800 5.300 .8z" fill="#2b59c3" stroke="none"/></svg>
<svg class="a" style="left:1376.90px;top:626.00px;transform:scaleX(-1);" width="26.4" height="26.4" viewBox="0 0 24 24" fill="#2b59c3"><path d="M22 4c0-1.1-.9-2-2-2H4c-1.1 0-2 .9-2 2v12c0 1.1.9 2 2 2h14l4 4V4zm-2 13.17L18.83 16H4V4h16v13.17zM13 5h-2v4H7v2h4v4h2v-4h4V9h-4z"/></svg>
<svg class="a" style="left:1377.30px;top:669.90px;" width="26" height="26" viewBox="0 0 24 24" fill="#2b59c3"><path d="M11.99 2C6.47 2 2 6.48 2 12s4.47 10 9.99 10C17.52 22 22 17.52 22 12S17.52 2 11.99 2zM12 20c-4.42 0-8-3.58-8-8s3.58-8 8-8 8 3.58 8 8-3.58 8-8 8zm3.5-9c.83 0 1.5-.67 1.5-1.5S16.33 8 15.5 8 14 8.67 14 9.5s.67 1.5 1.5 1.5zm-7 0c.83 0 1.5-.67 1.5-1.5S9.33 8 8.5 8 7 8.67 7 9.5 7.67 11 8.5 11zm3.5 6.5c2.33 0 4.31-1.46 5.11-3.5H6.89c.8 2.04 2.78 3.5 5.11 3.5z"/></svg>
<svg class="a" style="left:1377.30px;top:714.70px;" width="26.4" height="26.4" viewBox="0 0 24 24" fill="#2b59c3"><path d="M20 2H4c-1.1 0-1.99.9-1.99 2L2 22l4-4h14c1.1 0 2-.9 2-2V4c0-1.1-.9-2-2-2zm0 14H5.17L4 17.17V4h16v12zm-9.5-2H18v-2h-5.500zm3.86-5.870c.2-.2.2-.51 0-.71l-1.770-1.770c-.2-.2-.51-.2-.71 0L6 11.530V14h2.470l5.890-5.870z"/></svg>
<div class="a" style="left:1907px;top:620px;width:9px;height:48px;background:#dadce0;border-radius:4.5px;"></div>
<div class="a" style="left:1894px;top:978px;width:44px;height:44px;background:#fff;border-radius:22px;box-shadow:0 1px 3px rgba(60,64,67,.3),0 2px 6px 2px rgba(60,64,67,.15);"></div>
<svg class="a" style="left:1900.00px;top:991.50px;" width="18" height="18" viewBox="0 0 24 24" fill="#444746"><path d="M15.41 7.41L14 6l-6 6 6 6 1.41-1.41L10.83 12z"/></svg>
<div class="a" style="left:0px;top:1031px;width:1920px;height:1px;background:#ffffff;"></div>
<div class="a" style="left:0px;top:1032px;width:1920px;height:48px;background:#202020;"></div>
<div class="a" style="left:0px;top:1032px;width:1920px;height:1px;background:#1a1a1a;"></div>
<div class="a" style="left:20.500px;top:1045px;width:20px;height:20px;border-radius:10px;background:linear-gradient(160deg,#ffd21f 10%,#ff9a0a 60%,#f26a00)"></div>
<span class="t" style="top:1040.14px;font-size:12px;line-height:16px;color:#fff;left:50.7px;letter-spacing:-0.728px;">80°F</span>
<span class="t" style="top:1056.14px;font-size:12px;line-height:16px;color:#cfcfcf;left:50.7px;letter-spacing:-0.258px;">Sunny</span>
<svg class="a" style="left:484.500px;top:1044.500px" width="24" height="24" viewBox="0 0 24 24"><defs><linearGradient id="wg" x1="0" y1="0" x2="1" y2="1"><stop offset="0" stop-color="#6fdcff"/><stop offset="1" stop-color="#1a9eea"/></linearGradient></defs><g fill="url(#wg)"><rect x="0" y="0" width="11.300" height="11.300" rx="1"/><rect x="12.700" y="0" width="11.300" height="11.300" rx="1"/><rect x="0" y="12.700" width="11.300" height="11.300" rx="1"/><rect x="12.700" y="12.700" width="11.300" height="11.300" rx="1"/></g></svg>
<div class="a" style="left:521.5px;top:1040px;width:219.5px;height:32px;background:#323232;border-radius:16px;border:1px solid #4a4a4a;box-sizing:border-box;"></div>
<svg class="a" style="left:531px;top:1047.500px" width="17" height="17" viewBox="0 0 17 17" fill="none" stroke="#e8e8e8" stroke-width="1.600"><circle cx="7" cy="7" r="5.200"/><path d="M10.900 10.900L15.500 15.500" stroke-linecap="round"/></svg>
<span class="t" style="top:1047.15px;font-size:14px;line-height:18px;color:#dcdcdc;left:558px;letter-spacing:-0.672px;">Search</span>
<svg class="a" style="left:690px;top:1041px" width="46" height="30" viewBox="0 0 46 30"><ellipse cx="22" cy="27" rx="20" ry="2.500" fill="#d7dff5"/><circle cx="22" cy="13" r="11" fill="#f3c25b"/><circle cx="18" cy="9" r="2.200" fill="#e0a53f"/><circle cx="25.500" cy="15.500" r="3" fill="#e0a53f"/><circle cx="26" cy="7" r="1.400" fill="#e0a53f"/><circle cx="17.500" cy="17.500" r="1.500" fill="#e0a53f"/><path d="M0 27L3 19 5 24 7 17 9.500 24 12 20 14 27z" fill="#3f5fc4"/><path d="M30 27L32 21 34 25 36.500 17 39 24 41 20 44 27z" fill="#3f5fc4"/></svg>
<svg class="a" style="left:753.500px;top:1044px" width="24" height="24" viewBox="0 0 24 24"><rect x="1" y="8" width="14" height="13" rx="1.500" fill="#8b8b8b"/><rect x="7" y="2" width="16" height="14" rx="1.500" fill="#f2f2f2"/></svg>
<svg class="a" style="left:796.500px;top:1044px" width="24" height="24" viewBox="0 0 24 24"><path d="M12 1.500a10.500 10.500 0 1 1-5.500 19.400L1.500 22.500l1.600-4.800A10.500 10.500 0 0 1 12 1.500z" fill="#6f6fd8"/><rect x="5.500" y="8" width="9" height="8" rx="1.500" fill="#fff"/><path d="M15 11l4-2.500v7L15 13z" fill="#fff"/></svg>
<svg class="a" style="left:840.800px;top:1044px" width="24" height="24" viewBox="0 0 24 24"><path d="M1 4.500a1.500 1.500 0 0 1 1.500-1.500H9l2 2.500H21.500A1.500 1.500 0 0 1 23 7V9H1z" fill="#e8a317"/><rect x="1" y="6.500" width="22" height="15" rx="1.500" fill="#ffd04f"/><rect x="6" y="15" width="12" height="6.500" rx="1" fill="#1d82d2"/><rect x="8.500" y="17.300" width="7" height="1.700" rx=".8" fill="#0b5fa8"/></svg>
<svg class="a" style="left:885px;top:1044px" width="24" height="24" viewBox="0 0 24 24"><defs><linearGradient id="eg" x1="0" y1="0" x2="1" y2="1"><stop offset="0" stop-color="#35c1f1"/><stop offset=".5" stop-color="#1b88d8"/><stop offset="1" stop-color="#0c59a4"/></linearGradient></defs><circle cx="12" cy="12" r="11" fill="url(#eg)"/><path d="M2 10C3 4 8 1 13 1.500 19 2 23 6.500 23 11c0 3-2 4.500-4.500 4.500-2 0-3-.8-3-1.800 0-.7.800-1 .800-2.400C16.300 9 14.500 7 11.500 7 7 7 3 9.500 2 10z" fill="#54d86a" opacity=".85"/><path d="M8.500 13.500c0 4 3 7 7 7 1.500 0 3-.5 4-1.200C17.500 22 15 23 12 23 6 23 2.500 18 2 13c1-3 4-5 7.500-5-.6 1.200-1 3-1 5.500z" fill="#0e5fb0"/></svg>
<svg class="a" style="left:928.500px;top:1044px" width="24" height="24" viewBox="0 0 24 24"><defs><radialGradient id="fg" cx=".7" cy=".2" r="1"><stop offset="0" stop-color="#ffe226"/><stop offset=".4" stop-color="#ff8a16"/><stop offset=".8" stop-color="#f0353f"/><stop offset="1" stop-color="#c60084"/></radialGradient></defs><path d="M12 2.500c1.500-1 2.500-2 3-2.500.3 2 1.500 3 3 4.500C21 7 23 10 23 13.500 23 19.500 18 23.500 12 23.500S1 19 1 13c0-3 1.200-5.500 2.800-7 .2 1 .6 1.700 1.200 2.200C5.500 5.500 8 3 12 2.500z" fill="url(#fg)"/><circle cx="12.500" cy="13" r="5" fill="#7a3fe0"/><path d="M7 11c1.500-1.500 4-1.500 5.500 0 1 .9 2.500 1 3.500.5-.5 3-2.500 5-5 5S7 14.500 7 11z" fill="#ff9b1f"/></svg>
<div class="a" style="left:1053px;top:1036px;width:39px;height:40px;background:#2e2e2e;border-radius:5px;border:1px solid #3a3a3a;box-sizing:border-box;"></div>
<svg class="a" style="left:972.7px;top:1044px" width="24" height="24" viewBox="0 0 24 24"><circle cx="12" cy="12" r="11.500" fill="#fff"/><path d="M12 .5A11.500 11.500 0 0 1 21.960 6.250H12A5.750 5.750 0 0 0 7.020 9.130L2.040 6.250A11.500 11.500 0 0 1 12 .5z" fill="#ea4335"/><path d="M21.960 6.250A11.500 11.500 0 0 1 12 23.500l4.980-8.630A5.750 5.750 0 0 0 16.980 9.130L12 6.250z" fill="#fbbc04"/><path d="M12 23.500A11.500 11.500 0 0 1 2.040 6.250L7.020 14.870A5.750 5.750 0 0 0 12 17.750l4.980-2.880z" fill="#34a853"/><circle cx="12" cy="12" r="5.300" fill="#fff"/><circle cx="12" cy="12" r="4.200" fill="#4285f4"/></svg>
<svg class="a" style="left:1017px;top:1044px" width="24" height="24" viewBox="0 0 24 24"><circle cx="12" cy="12" r="11.500" fill="#fff"/><path d="M12 .5A11.500 11.500 0 0 1 21.960 6.250H12A5.750 5.750 0 0 0 7.020 9.130L2.040 6.250A11.500 11.500 0 0 1 12 .5z" fill="#ea4335"/><path d="M21.960 6.250A11.500 11.500 0 0 1 12 23.500l4.980-8.630A5.750 5.750 0 0 0 16.980 9.130L12 6.250z" fill="#fbbc04"/><path d="M12 23.500A11.500 11.500 0 0 1 2.040 6.250L7.020 14.870A5.750 5.750 0 0 0 12 17.750l4.980-2.880z" fill="#34a853"/><circle cx="12" cy="12" r="5.300" fill="#fff"/><circle cx="12" cy="12" r="4.200" fill="#4285f4"/></svg>
<svg class="a" style="left:1060.5px;top:1044px" width="24" height="24" viewBox="0 0 24 24"><circle cx="12" cy="12" r="11.500" fill="#fff"/><path d="M12 .5A11.500 11.500 0 0 1 21.960 6.250H12A5.750 5.750 0 0 0 7.020 9.130L2.040 6.250A11.500 11.500 0 0 1 12 .5z" fill="#ea4335"/><path d="M21.960 6.250A11.500 11.500 0 0 1 12 23.500l4.980-8.630A5.750 5.750 0 0 0 16.980 9.130L12 6.250z" fill="#fbbc04"/><path d="M12 23.500A11.500 11.500 0 0 1 2.040 6.250L7.020 14.870A5.750 5.750 0 0 0 12 17.750l4.980-2.880z" fill="#34a853"/><circle cx="12" cy="12" r="5.300" fill="#fff"/><circle cx="12" cy="12" r="4.200" fill="#4285f4"/></svg>
<div class="a" style="left:989px;top:1039px;width:13px;height:13px;background:#c9b8a8;border-radius:6.5px;"></div>
<div class="a" style="left:992.5px;top:1041px;width:6px;height:7px;background:#5a4034;border-radius:3px;"></div>
<div class="a" style="left:1034px;top:1042px;width:11px;height:11px;background:#3a3a3a;border-radius:3px;"></div>
<div class="a" style="left:1076px;top:1038px;width:14px;height:14px;background:#d01c5b;border-radius:7px;"></div>
<span class="t" style="top:1039.31px;font-size:9.5px;line-height:12px;color:#fff;left:1083px;transform:translateX(-50%);">S</span>
<div class="a" style="left:1065.5px;top:1071.5px;width:15px;height:3px;background:#4cc2ff;border-radius:1.5px;"></div>
<svg class="a" style="left:1104.800px;top:1046px" width="24" height="19" viewBox="0 0 24 19"><rect width="24" height="19" rx="1" fill="#dff1fb"/><path d="M1 16l3-5 2 2 2-9 2 8 3-3 2 4 2-10 2 9 2-3 2 7z" fill="#7ec3ea" stroke="#2a8dd0" stroke-width=".8"/></svg>
<svg class="a" style="left:1148.500px;top:1046px" width="23" height="19" viewBox="0 0 23 19"><rect width="23" height="19" rx="1" fill="#0c0c0c" stroke="#bdbdbd" stroke-width="1"/><rect x="1" y="1" width="21" height="2.500" fill="#cfcfcf"/><path d="M3 8h2M6 7v2.500M8 9.500h8" stroke="#eee" stroke-width="1.200"/></svg>
<svg class="a" style="left:1192px;top:1044px" width="24" height="24" viewBox="0 0 24 24"><path d="M6 2C2 2 .5 6 1.500 11c.6 3 2 6 4 6 1 0 1.500-.5 2-1.500V20c0 2 1.500 3.500 3.500 3.500S14.500 22 14.500 20v-4c2 1 5 .5 7-1 .5-.4.3-1-.5-1-1 .2-2 .2-2.500-.3C20.500 11 23 6 21.500 3.500 20 1 16.500.5 14 1.500 12 .8 8.500.8 6 2z" fill="#4a7fb0" stroke="#e9eef3" stroke-width="1"/><circle cx="8" cy="7.500" r="1" fill="#fff"/><circle cx="16" cy="7.500" r="1" fill="#fff"/></svg>
<svg class="a" style="left:1237px;top:1044px" width="24" height="24" viewBox="0 0 24 24"><path d="M17.500 1L23 3.500v17L17.500 23 7 13.500 3 16.500 1 15.500v-7l2-1 4 3z" fill="#2d9cf0"/><path d="M17.500 1L23 3.500v17L17.500 23z" fill="#1a78c8"/><path d="M17.500 7.500v9L11 12z" fill="#1c1c1c"/><path d="M1 8.500l2-1 4 3.200L4.500 12.500z" fill="#1f86d8"/></svg>
<svg class="a" style="left:1280.500px;top:1044px" width="24" height="24" viewBox="0 0 24 24"><path d="M1 6L8 1l15 4-3 17-9 2L1 19z" fill="#21d789"/><path d="M14 1.500L23 5l-2 12z" fill="#07c3f2"/><path d="M12 23l9-3 2-8-6 6z" fill="#fcf84a"/><rect x="4.500" y="4.500" width="15" height="15" fill="#000"/><text x="6" y="12.500" font-family="Liberation Sans" font-weight="bold" font-size="7.500" fill="#fff">PC</text><rect x="6" y="16" width="5.500" height="1.200" fill="#fff"/></svg>
<svg class="a" style="left:1324.800px;top:1044px" width="24" height="24" viewBox="0 0 24 24"><g transform="rotate(45 12 12)"><rect x="3.500" y="3.500" width="8" height="8" rx="1" fill="#ef6f6c"/><rect x="12.500" y="3.500" width="8" height="8" rx="1" fill="#7fc97f"/><rect x="3.500" y="12.500" width="8" height="8" rx="1" fill="#5b8def"/><rect x="12.500" y="12.500" width="8" height="8" rx="1" fill="#f4d35e"/></g><path d="M12 5v14M12 12l4-3" stroke="#111" stroke-width="1.600" fill="none"/><circle cx="12" cy="6" r="1.800" fill="#111"/><circle cx="12" cy="18" r="1.800" fill="#111"/><circle cx="16" cy="9" r="1.600" fill="#111"/></svg>
<svg class="a" style="left:1369px;top:1044px" width="24" height="24" viewBox="0 0 24 24"><rect width="24" height="24" fill="#fff"/><rect x="5" y="4" width="14" height="10" rx="1" fill="#fff" stroke="#1a7bd0" stroke-width="1.500"/><path d="M8 10l2-2 2 1.500 3-3" stroke="#32a852" stroke-width="1.300" fill="none"/><rect x="9" y="14.500" width="6" height="1.500" fill="#1a7bd0"/><text x="12" y="21" text-anchor="middle" font-family="Liberation Sans" font-size="4" fill="#333">TaskPro</text></svg>
<svg class="a" style="left:1414.800px;top:1044px" width="20" height="24" viewBox="0 0 20 24"><path d="M2 0H14l6 6V22a2 2 0 0 1-2 2H2a2 2 0 0 1-2-2V2A2 2 0 0 1 2 0z" fill="#1c7fd8"/><path d="M14 0l6 6h-6z" fill="#0f5fb0"/><rect x="4" y="10" width="7" height="1.800" fill="#fff"/><rect x="4" y="14" width="12" height="1.800" fill="#fff"/><rect x="4" y="18" width="12" height="1.800" fill="#fff"/><rect x="12.500" y="8.500" width="4" height="3.500" fill="#cfe6fa"/></svg>
<div class="a" style="left:849.8px;top:1072px;width:6px;height:2.5px;background:#9a9a9a;border-radius:1.3px;"></div>
<div class="a" style="left:981.7px;top:1072px;width:6px;height:2.5px;background:#9a9a9a;border-radius:1.3px;"></div>
<div class="a" style="left:1246px;top:1072px;width:6px;height:2.5px;background:#9a9a9a;border-radius:1.3px;"></div>
<div class="a" style="left:1378px;top:1072px;width:6px;height:2.5px;background:#9a9a9a;border-radius:1.3px;"></div>
<div class="a" style="left:1421.8px;top:1072px;width:6px;height:2.5px;background:#9a9a9a;border-radius:1.3px;"></div>
<svg class="a" style="left:1671px;top:1051px" width="13" height="9" viewBox="0 0 13 9" fill="none" stroke="#fff" stroke-width="1.600"><path d="M1 7.500L6.500 2 12 7.500"/></svg>
<svg class="a" style="left:1700px;top:1049.500px" width="18" height="12" viewBox="0 0 18 12"><path d="M4.500 12A4.200 4.200 0 0 1 4 3.700 5 5 0 0 1 13.300 3 4.600 4.600 0 0 1 13.500 12z" fill="#c8c8c8"/><path d="M6 12l7.500-8.500a4.600 4.600 0 0 1 0 8.500z" fill="#f4f4f4"/></svg>
<svg class="a" style="left:1733px;top:1050px" width="17" height="12" viewBox="0 0 17 12" fill="none" stroke="#fff" stroke-width="1.100"><rect x=".6" y=".6" width="15.800" height="10.800" rx="1.500"/><path d="M3 3.800h1.400M5.800 3.800h1.400M8.600 3.800h1.400M11.400 3.800h1.400M3 6h1.400M5.800 6h1.400M8.600 6h1.400M11.400 6h1.400M4.500 8.500h8" stroke-width="1.300"/></svg>
<svg class="a" style="left:1764px;top:1048.500px" width="18" height="14" viewBox="0 0 18 14" fill="none" stroke="#fff" stroke-width="1.500" stroke-linecap="round"><path d="M1 5a11.500 11.500 0 0 1 16 0"/><path d="M3.800 7.900a7.500 7.500 0 0 1 10.400 0"/><path d="M6.500 10.600a3.600 3.600 0 0 1 5 0"/><circle cx="9" cy="12.600" r=".9" fill="#fff" stroke="none"/></svg>
<svg class="a" style="left:1788px;top:1048.500px" width="18" height="15" viewBox="0 0 18 15" fill="none" stroke="#fff" stroke-width="1.200" stroke-linejoin="round"><path d="M1 5.500h2.500L7 2v11L3.500 9.500H1z"/><path d="M9.500 5a3.500 3.500 0 0 1 0 5M11.800 3a6.300 6.300 0 0 1 0 9M14.100 1a9.300 9.300 0 0 1 0 13" stroke-linecap="round"/></svg>
<span class="t" style="top:1040.54px;font-size:12px;line-height:16px;color:#fff;left:1833.7px;letter-spacing:-0.317px;">2:40 PM</span>
<span class="t" style="top:1056.54px;font-size:12px;line-height:16px;color:#fff;left:1821.9px;letter-spacing:0.151px;">12/4/2025</span>
<svg class="a" style="left:1884.500px;top:1048px" width="15" height="17" viewBox="0 0 15 17"><path d="M7.500 0a5 5 0 0 1 5 5v4.500l2 3H.5l2-3V5a5 5 0 0 1 5-5z" fill="#6fd6f7"/><path d="M5.300 14h4.400a2.200 2.200 0 0 1-4.400 0z" fill="#6fd6f7"/></svg>
<div class="a" style="left:0px;top:0px;width:1920px;height:41px;background:#d4e7e2;"></div>
<div class="a" style="left:6px;top:6px;width:28px;height:28px;background:#eff8f5;border-radius:9px;"></div>
<svg class="a" style="left:12.00px;top:12.00px;" width="16" height="16" viewBox="0 0 24 24" fill="#1f2a28"><path d="M16.59 8.59L12 13.17 7.41 8.59 6 10l6 6 6-6z"/></svg>
<div class="a" style="left:0px;top:40px;width:1920px;height:80px;background:#f1fbf7;border-radius:8px 8px 0 0;"></div>
<svg class="a" style="left:744px;top:6px" width="252" height="35" viewBox="0 0 252 35"><path d="M0 35 C7 35 10 32 10 25 V10 C10 4 14 0 20 0 H232 C238 0 242 4 242 10 V25 C242 32 245 35 252 35 Z" fill="#f1fbf7"/></svg>
<svg class="a" style="left:48.00px;top:12.00px;" width="16" height="16" viewBox="0 0 24 24" fill="none"><g fill="none" stroke="#1f2a28" stroke-width="1.900"><rect x="7.600" y="2.200" width="10.800" height="6.800" rx="3.400" transform="rotate(36 12 12)"/><rect x="7.600" y="2.200" width="10.800" height="6.800" rx="3.400" transform="rotate(96 12 12)"/><rect x="7.600" y="2.200" width="10.800" height="6.800" rx="3.400" transform="rotate(156 12 12)"/><rect x="7.600" y="2.200" width="10.800" height="6.800" rx="3.400" transform="rotate(216 12 12)"/><rect x="7.600" y="2.200" width="10.800" height="6.800" rx="3.400" transform="rotate(276 12 12)"/><rect x="7.600" y="2.200" width="10.800" height="6.800" rx="3.400" transform="rotate(336 12 12)"/></g></svg>
<span class="t" style="top:12.94px;font-size:12px;line-height:16px;color:#3b4a47;left:72px;letter-spacing:-0.076px;">Simple text version</span>
<svg class="a" style="left:251px;top:15px" width="10" height="10" viewBox="0 0 10 10"><path d="M1.200 1.200L8.800 8.800M8.800 1.200L1.200 8.800" stroke="#2a3533" stroke-width="1.550" fill="none"/></svg>
<div class="a" style="left:274px;top:12px;width:1.5px;height:16px;background:#b3c7c2;"></div>
<svg class="a" style="left:286px;top:14px" width="16" height="12" viewBox="0 0 16 12"><path d="M0 1.200V11.200C0 11.640.36 12 .8 12H3.600V5L8 8.300 12.400 5V12H15.200C15.640 12 16 11.640 16 11.200V1.200z" fill="none"/><path d="M0 2.700V11.100c0 .5.4.9.9.9H3.600V5.400z" fill="#4285f4"/><path d="M12.400 5.400V12h2.700c.5 0 .9-.4.9-.9V2.700z" fill="#34a853"/><path d="M12.400 1.300V5.400L16 2.700V1.600C16 .3 14.500-.4 13.500.4z" fill="#fbbc04"/><path d="M3.600 5.400V1.300L8 4.600l4.400-3.300v4.100L8 8.700z" fill="#ea4335"/><path d="M0 1.600v1.100l3.600 2.700V1.300L2.500.4C1.500-.4 0 .3 0 1.600z" fill="#c5221f"/></svg>
<span class="t" style="top:12.94px;font-size:12px;line-height:16px;color:#3b4a47;left:310px;letter-spacing:-0.008px;-webkit-mask-image:linear-gradient(90deg,#000 88%,transparent);">Inbox (8) - saiful@momentum-v</span>
<svg class="a" style="left:489px;top:15px" width="10" height="10" viewBox="0 0 10 10"><path d="M1.200 1.200L8.800 8.800M8.800 1.200L1.200 8.800" stroke="#2a3533" stroke-width="1.550" fill="none"/></svg>
<div class="a" style="left:512px;top:12px;width:1.5px;height:16px;background:#b3c7c2;"></div>
<svg class="a" style="left:524px;top:12px" width="16" height="16" viewBox="0 0 16 16"><rect x="0.5" y="0.5" width="15" height="15" rx="2.2" fill="#4a86e8"/><rect x="3.5" y="4" width="9" height="1.6" fill="#fff"/><rect x="3.5" y="7.2" width="9" height="1.6" fill="#fff"/><rect x="3.5" y="10.4" width="6" height="1.6" fill="#fff"/></svg>
<span class="t" style="top:12.94px;font-size:12px;line-height:16px;color:#3b4a47;left:548px;letter-spacing:-0.089px;-webkit-mask-image:linear-gradient(90deg,#000 88%,transparent);">ISIJ - Implementation guide - Go</span>
<svg class="a" style="left:727px;top:15px" width="10" height="10" viewBox="0 0 10 10"><path d="M1.200 1.200L8.800 8.800M8.800 1.200L1.200 8.800" stroke="#2a3533" stroke-width="1.550" fill="none"/></svg>
<svg class="a" style="left:762px;top:12px" width="16" height="16" viewBox="0 0 16 16"><rect x="0.5" y="0.5" width="15" height="15" rx="2.2" fill="#4a86e8"/><rect x="3.5" y="4" width="9" height="1.6" fill="#fff"/><rect x="3.5" y="7.2" width="9" height="1.6" fill="#fff"/><rect x="3.5" y="10.4" width="6" height="1.6" fill="#fff"/></svg>
<span class="t" style="top:12.94px;font-size:12px;line-height:16px;color:#1f2a28;left:786px;letter-spacing:-0.170px;">Section 6 Track - Google Docs</span>
<svg class="a" style="left:964px;top:15px" width="10" height="10" viewBox="0 0 10 10"><path d="M1.200 1.200L8.800 8.800M8.800 1.200L1.200 8.800" stroke="#1f2a28" stroke-width="1.550" fill="none"/></svg>
<svg class="a" style="left:1000.00px;top:12.00px;" width="16" height="16" viewBox="0 0 24 24" fill="none"><g fill="none" stroke="#1f2a28" stroke-width="1.900"><rect x="7.600" y="2.200" width="10.800" height="6.800" rx="3.400" transform="rotate(36 12 12)"/><rect x="7.600" y="2.200" width="10.800" height="6.800" rx="3.400" transform="rotate(96 12 12)"/><rect x="7.600" y="2.200" width="10.800" height="6.800" rx="3.400" transform="rotate(156 12 12)"/><rect x="7.600" y="2.200" width="10.800" height="6.800" rx="3.400" transform="rotate(216 12 12)"/><rect x="7.600" y="2.200" width="10.800" height="6.800" rx="3.400" transform="rotate(276 12 12)"/><rect x="7.600" y="2.200" width="10.800" height="6.800" rx="3.400" transform="rotate(336 12 12)"/></g></svg>
<span class="t" style="top:12.94px;font-size:12px;line-height:16px;color:#3b4a47;left:1024px;letter-spacing:-0.015px;-webkit-mask-image:linear-gradient(90deg,#000 88%,transparent);">Flow comparison 6.x requireme</span>
<svg class="a" style="left:1203px;top:15px" width="10" height="10" viewBox="0 0 10 10"><path d="M1.200 1.200L8.800 8.800M8.800 1.200L1.200 8.800" stroke="#2a3533" stroke-width="1.550" fill="none"/></svg>
<div class="a" style="left:1226px;top:12px;width:1.5px;height:16px;background:#b3c7c2;"></div>
<svg class="a" style="left:1238px;top:12px" width="16" height="16" viewBox="0 0 16 16"><circle cx="8" cy="8" r="7.300" fill="#4a5553"/><circle cx="8" cy="8" r="3.300" fill="#4a5553" stroke="#d5e8e3" stroke-width="1.300"/><path d="M8 4.700H14.500M5.150 9.650L1.900 4M10.850 9.650L7.600 15.300" stroke="#d5e8e3" stroke-width="1.300" fill="none"/></svg>
<span class="t" style="top:12.94px;font-size:12px;line-height:16px;color:#3b4a47;left:1262px;letter-spacing:-0.247px;">New Tab</span>
<svg class="a" style="left:1441px;top:15px" width="10" height="10" viewBox="0 0 10 10"><path d="M1.200 1.200L8.800 8.800M8.800 1.200L1.200 8.800" stroke="#2a3533" stroke-width="1.550" fill="none"/></svg>
<div class="a" style="left:1464px;top:12px;width:1.5px;height:16px;background:#b3c7c2;"></div>
<svg class="a" style="left:1474.00px;top:12.00px;" width="16" height="16" viewBox="0 0 24 24" fill="#1f2a28"><path d="M19 13h-6v6h-2v-6H5v-2h6V5h2v6h6v2z"/></svg>
<div class="a" style="left:1800px;top:19px;width:10px;height:1px;background:#6f807c;"></div>
<svg class="a" style="left:1845px;top:14px" width="12" height="12" viewBox="0 0 12 12" fill="none" stroke="#74847f" stroke-width="1"><rect x="0.500" y="2.500" width="8" height="8" rx="1"/><path d="M2.500 2.500V1.500a1 1 0 0 1 1-1h6a1.500 1.500 0 0 1 1.500 1.500v6a1 1 0 0 1-1 1h-1"/></svg>
<svg class="a" style="left:1892px;top:15px" width="11" height="11" viewBox="0 0 11 11" stroke="#65756f" stroke-width="1.100"><path d="M0.500 0.500L10.500 10.500M10.500 0.500L0.500 10.500"/></svg>
<svg class="a" style="left:12.50px;top:53.50px;" width="19" height="19" viewBox="0 0 24 24" fill="#414b49"><path d="M20 11H7.83l5.59-5.59L12 4l-8 8 8 8 1.41-1.41L7.83 13H20v-2z"/></svg>
<svg class="a" style="left:47.50px;top:53.50px;" width="19" height="19" viewBox="0 0 24 24" fill="#a9b5b2"><path d="M12 4l-1.41 1.41L16.17 11H4v2h12.17l-5.58 5.59L12 20l8-8z"/></svg>
<svg class="a" style="left:84.50px;top:53.50px;" width="19" height="19" viewBox="0 0 24 24" fill="#414b49"><path d="M17.65 6.35C16.2 4.9 14.21 4 12 4c-4.42 0-7.99 3.58-7.99 8s3.57 8 7.99 8c3.73 0 6.84-2.55 7.73-6h-2.08c-.82 2.33-3.04 4-5.65 4-3.31 0-6-2.69-6-6s2.69-6 6-6c1.66 0 3.14.69 4.22 1.78L13 11h7V4l-2.35 2.35z"/></svg>
<div class="a" style="left:120px;top:46px;width:1552px;height:34px;background:#d8efe9;border-radius:17px;"></div>
<div class="a" style="left:124px;top:50px;width:26px;height:26px;background:#f3fbf8;border-radius:13px;"></div>
<svg class="a" style="left:129px;top:55px" width="16" height="16" viewBox="0 0 16 16" fill="none" stroke="#1f2a28" stroke-width="1.600" stroke-linecap="round"><circle cx="4.200" cy="4.500" r="2"/><path d="M9 4.500H14.500"/><circle cx="11.800" cy="11.500" r="2"/><path d="M1.500 11.500H7"/></svg>
<span class="t" style="top:54.15px;font-size:14px;line-height:18px;color:#4a5755;left:157px;letter-spacing:-0.032px;"><span style="color:#1f2a28">docs.google.com</span>/document/d/1jkdXn2EE3q0X3iH0ePpihtUUAfQaioEdyI0p_dKA6Mo/edit?tab=t.0</span>
<svg class="a" style="left:1607.50px;top:53.50px;" width="19" height="19" viewBox="0 0 24 24" fill="#1f2a28"><path d="M15.5 14h-.79l-.28-.27C15.41 12.59 16 11.11 16 9.5 16 5.91 13.09 3 9.5 3S3 5.91 3 9.5 5.91 16 9.5 16c1.61 0 3.09-.59 4.23-1.57l.27.28v.79l5 4.99L20.49 19l-4.99-5zm-6 0C7.01 14 5 11.99 5 9.500S7.010 5 9.500 5 14 7.010 14 9.500 11.990 14 9.500 14zm.5-7H9v2H7v1h2v2h1v-2h2V9h-2z"/></svg>
<svg class="a" style="left:1640.50px;top:53.50px;" width="19" height="19" viewBox="0 0 24 24" fill="#1f2a28"><path d="M22 9.24l-7.19-.62L12 2 9.19 8.63 2 9.24l5.46 4.73L5.82 21 12 17.27 18.18 21l-1.63-7.03L22 9.24zM12 15.4l-3.76 2.27 1-4.28-3.32-2.88 4.38-.38L12 6.1l1.71 4.04 4.38.38-3.32 2.88 1 4.28L12 15.4z"/></svg>
<svg class="a" style="left:1691.50px;top:54.50px;" width="17" height="17" viewBox="0 0 24 24" fill="#8e9a97"><path d="M9 2L7.17 4H4c-1.1 0-2 .9-2 2v12c0 1.1.9 2 2 2h16c1.1 0 2-.9 2-2V6c0-1.1-.9-2-2-2h-3.170L15 2H9zm3 15c-2.760 0-5-2.240-5-5s2.240-5 5-5 5 2.240 5 5-2.240 5-5 5zm0-8.200a3.200 3.200 0 1 0 0 6.400 3.200 3.200 0 0 0 0-6.400z"/></svg>
<svg class="a" style="left:1727px;top:54px" width="19" height="19" viewBox="0 0 19 19"><circle cx="8.500" cy="9" r="7" fill="#fff" stroke="#3b66c4" stroke-width="2"/><rect x="7.500" y="4.500" width="2" height="6" fill="#3b66c4"/><rect x="7.500" y="11.500" width="2" height="2" fill="#3b66c4"/><rect x="11" y="11.500" width="7" height="6" rx="1" fill="#1f1f1f"/><path d="M12.600 11.500V10a1.900 1.900 0 0 1 3.800 0v1.500" fill="none" stroke="#1f1f1f" stroke-width="1.200"/></svg>
<svg class="a" style="left:1763px;top:53.500px" width="19" height="19" viewBox="0 0 19 19" fill="none" stroke="#1f3a36" stroke-width="1.900" stroke-linejoin="round"><path d="M2.500 5.200H6.300a2.300 2.300 0 0 1 4.600 0H14.300V8.600a2.300 2.300 0 0 1 0 4.600V16.800H2.500V13.200a2.300 2.300 0 0 0 0-4.600z"/></svg>
<div class="a" style="left:1798px;top:55px;width:2px;height:16px;background:#7fd8e6;border-radius:1px;"></div>
<svg class="a" style="left:1817.500px;top:54px" width="17" height="18" viewBox="0 0 17 18" fill="none" stroke="#1f3a36" stroke-width="1.900"><path d="M8.500 1.500V11M4.200 7L8.500 11.300 12.800 7M1.300 12.500V14.500a1.500 1.500 0 0 0 1.500 1.500H14.200a1.500 1.500 0 0 0 1.500-1.500V12.500"/></svg>
<div class="a" style="left:1852px;top:53px;width:20px;height:20px;background:#d01c5b;border-radius:10px;"></div>
<span class="t" style="top:56.49px;font-size:11px;line-height:14px;color:#fff;left:1862px;transform:translateX(-50%);">S</span>
<svg class="a" style="left:1887.00px;top:52.00px;" width="22" height="22" viewBox="0 0 24 24" fill="#1f3a36"><path d="M12 8c1.1 0 2-.9 2-2s-.9-2-2-2-2 .9-2 2 .9 2 2 2zm0 2c-1.1 0-2 .9-2 2s.9 2 2 2 2-.9 2-2-.9-2-2-2zm0 6c-1.1 0-2 .9-2 2s.9 2 2 2 2-.9 2-2-.9-2-2-2z"/></svg>
<svg class="a" style="left:13px;top:93px" width="14" height="14" viewBox="0 0 14 14" fill="none" stroke="#3b4644" stroke-width="1.500"><rect x="0.750" y="0.750" width="4.500" height="4.500"/><rect x="8.750" y="0.750" width="4.500" height="4.500"/><rect x="0.750" y="8.750" width="4.500" height="4.500"/><rect x="8.750" y="8.750" width="4.500" height="4.500"/></svg>
<div class="a" style="left:42px;top:92px;width:2px;height:16px;background:#7fd8e6;border-radius:1px;"></div>
<svg class="a" style="left:58.50px;top:92.50px;" width="15" height="15" viewBox="0 0 24 24" fill="none"><g fill="none" stroke="#2a3533" stroke-width="1.900"><rect x="7.600" y="2.200" width="10.800" height="6.800" rx="3.400" transform="rotate(36 12 12)"/><rect x="7.600" y="2.200" width="10.800" height="6.800" rx="3.400" transform="rotate(96 12 12)"/><rect x="7.600" y="2.200" width="10.800" height="6.800" rx="3.400" transform="rotate(156 12 12)"/><rect x="7.600" y="2.200" width="10.800" height="6.800" rx="3.400" transform="rotate(216 12 12)"/><rect x="7.600" y="2.200" width="10.800" height="6.800" rx="3.400" transform="rotate(276 12 12)"/><rect x="7.600" y="2.200" width="10.800" height="6.800" rx="3.400" transform="rotate(336 12 12)"/></g></svg>
<span class="t" style="top:92.14px;font-size:12px;line-height:16px;color:#3b4a47;left:80px;letter-spacing:-0.669px;">ChatGPT</span>
<svg class="a" style="left:142.50px;top:92.50px;" width="15" height="15" viewBox="0 0 24 24" fill="none"><g fill="none" stroke="#2a3533" stroke-width="1.900"><rect x="7.600" y="2.200" width="10.800" height="6.800" rx="3.400" transform="rotate(36 12 12)"/><rect x="7.600" y="2.200" width="10.800" height="6.800" rx="3.400" transform="rotate(96 12 12)"/><rect x="7.600" y="2.200" width="10.800" height="6.800" rx="3.400" transform="rotate(156 12 12)"/><rect x="7.600" y="2.200" width="10.800" height="6.800" rx="3.400" transform="rotate(216 12 12)"/><rect x="7.600" y="2.200" width="10.800" height="6.800" rx="3.400" transform="rotate(276 12 12)"/><rect x="7.600" y="2.200" width="10.800" height="6.800" rx="3.400" transform="rotate(336 12 12)"/></g></svg>
<span class="t" style="top:92.14px;font-size:12px;line-height:16px;color:#3b4a47;left:164px;letter-spacing:-0.114px;">Connect Gmail UI</span>
<svg class="a" style="left:273.50px;top:92.50px;" width="15" height="15" viewBox="0 0 24 24" fill="none"><g fill="none" stroke="#2a3533" stroke-width="1.900"><rect x="7.600" y="2.200" width="10.800" height="6.800" rx="3.400" transform="rotate(36 12 12)"/><rect x="7.600" y="2.200" width="10.800" height="6.800" rx="3.400" transform="rotate(96 12 12)"/><rect x="7.600" y="2.200" width="10.800" height="6.800" rx="3.400" transform="rotate(156 12 12)"/><rect x="7.600" y="2.200" width="10.800" height="6.800" rx="3.400" transform="rotate(216 12 12)"/><rect x="7.600" y="2.200" width="10.800" height="6.800" rx="3.400" transform="rotate(276 12 12)"/><rect x="7.600" y="2.200" width="10.800" height="6.800" rx="3.400" transform="rotate(336 12 12)"/></g></svg>
<span class="t" style="top:92.14px;font-size:12px;line-height:16px;color:#3b4a47;left:295px;letter-spacing:-0.225px;">Login URL mismatc...</span>
<div class="a" style="left:0px;top:119.5px;width:1920px;height:1px;background:#d5e3df;"></div>
</div></body></html>
